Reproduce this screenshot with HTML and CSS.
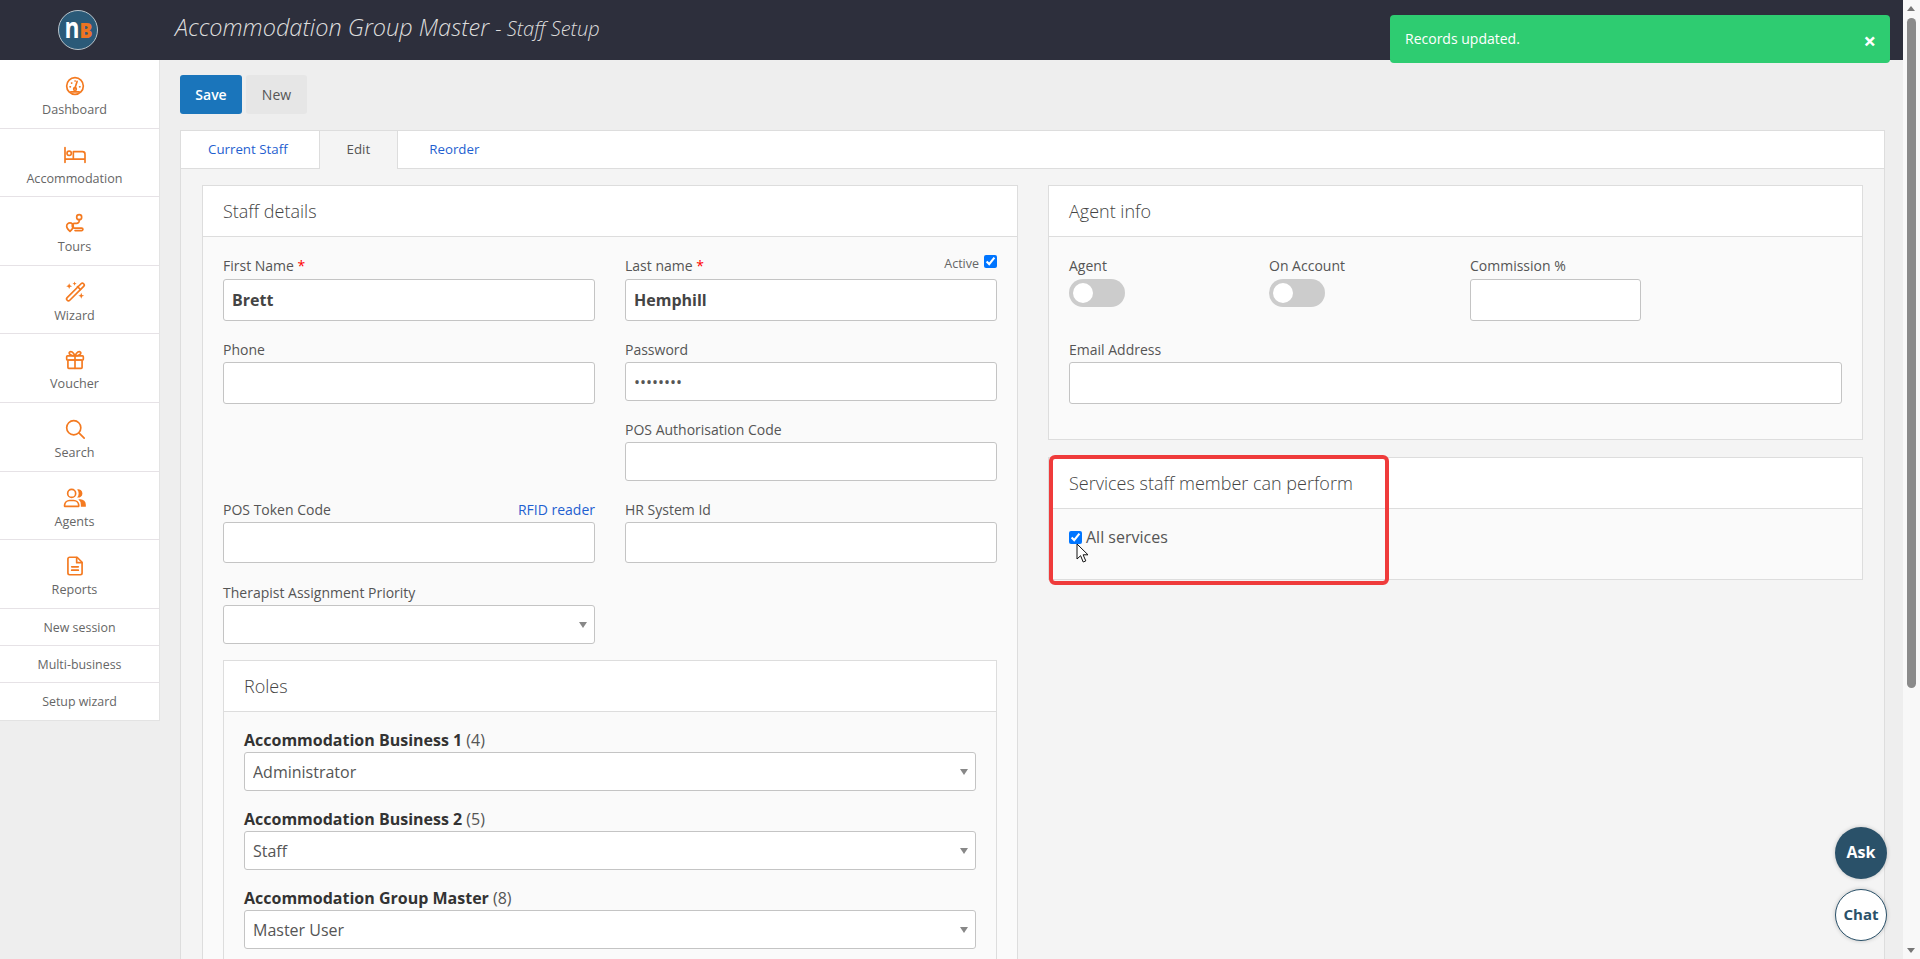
FILE: index.html
```html
<!DOCTYPE html>
<html>
    <head>
        <title>Staff Setup</title>
        <link rel="stylesheet" href="styles.css">
    </head>
    <body>
        <div class="shell">
            <div class="page">
                <div class="topbar">
                    <div class="logo_wrap">
                        <svg class="logo" width="42" height="42" viewBox="0 0 42 42">
                            <circle cx="21" cy="21" r="19.5" fill="#2b5a78" stroke="#b9c4cb" stroke-width="1"/>
                            <text x="7.5" y="29" class="logo_n" textLength="15" lengthAdjust="spacingAndGlyphs">n</text>
                            <text x="22.5" y="29" class="logo_b" textLength="13" lengthAdjust="spacingAndGlyphs">B</text>
                        </svg>
                    </div>
                    <h1 class="page_title">Accommodation Group Master <small>- Staff Setup</small></h1>
                </div>
                <div class="body_row">
                    <div class="sidebar">
                        <a class="nav_item">
                            <svg class="nav_icon" viewBox="0 0 24 24"><circle cx="12" cy="12" r="10"/><path d="M12 14.5l2.5-8"/><circle cx="12" cy="15.5" r="1.6"/><path d="M6 13h.5M7.8 8.5h.4M12 6h.3M17.5 13h.5M7 19h10"/></svg>
                            <span>Dashboard</span>
                        </a>
                        <a class="nav_item">
                            <svg class="nav_icon nav_icon_wide" viewBox="0 0 28 24"><path d="M2 3v18M2 17h24M26 21V11a3 3 0 0 0-3-3H12v9"/><circle cx="7" cy="10" r="2.6"/></svg>
                            <span>Accommodation</span>
                        </a>
                        <a class="nav_item">
                            <svg class="nav_icon" viewBox="0 0 24 24"><circle cx="17" cy="5" r="3"/><path d="M17 8v1.500a3 3 0 0 1-3 3h-2.500a2.800 2.800 0 0 0 0 5.600H20a1.500 1.500 0 0 1 0 3h-8"/><path d="M6 22s-4-3.500-4-6.200a4 4 0 0 1 8 0C10 18.500 6 22 6 22z"/></svg>
                            <span>Tours</span>
                        </a>
                        <a class="nav_item">
                            <svg class="nav_icon" viewBox="0 0 24 24"><rect x="-1.500" y="9.800" width="28" height="4.400" rx="2.200" transform="rotate(-45 12.500 12)"/><path d="M15 5.500l3.500 3.500"/><path class="icon_fill" d="M5 1.500l1 2.500 2.500 1-2.500 1-1 2.500-1-2.500-2.500-1 2.500-1zM11.500-.5l.7 1.800 1.800.7-1.800.7-.7 1.800-.7-1.800-1.800-.7 1.800-.7zM19.500 13l1 2.500 2.500 1-2.500 1-1 2.500-1-2.500-2.500-1 2.500-1z"/></svg>
                            <span>Wizard</span>
                        </a>
                        <a class="nav_item">
                            <svg class="nav_icon" viewBox="0 0 24 24"><rect x="2" y="7" width="20" height="5" rx="1"/><rect x="3.500" y="12" width="17" height="10" rx="1"/><path d="M12 7v15M12 7C10 2 7 1 5.500 2.500S6 7 12 7zM12 7c2-5 5-6 6.500-4.500S18 7 12 7z"/></svg>
                            <span>Voucher</span>
                        </a>
                        <a class="nav_item">
                            <svg class="nav_icon" viewBox="0 0 24 24"><circle cx="10.500" cy="10.500" r="8.500"/><path d="M16.700 16.700L23 23"/></svg>
                            <span>Search</span>
                        </a>
                        <a class="nav_item">
                            <svg class="nav_icon nav_icon_wide" viewBox="0 0 28 24"><circle cx="10" cy="6.500" r="4.800"/><path d="M1.500 22v-1.500a6 6 0 0 1 6-5.500h5a6 6 0 0 1 6 5.500V22z"/><path class="icon_fill" d="M16.500 1.700a5 5 0 1 1 0 9.600 7 7 0 0 0 0-9.600zM18 13.500h2.500a6.500 6.500 0 0 1 6.500 6.500v2.500h-6V20a8.500 8.500 0 0 0-3-6.500z"/></svg>
                            <span>Agents</span>
                        </a>
                        <a class="nav_item">
                            <svg class="nav_icon" viewBox="0 0 24 24"><path d="M5.500 1.500h9l6 6v13a2 2 0 0 1-2 2h-13a2 2 0 0 1-2-2v-17a2 2 0 0 1 2-2z"/><path d="M14 2v6h6M8 13h8M8 17h8"/></svg>
                            <span>Reports</span>
                        </a>
                        <a class="nav_link">New session</a>
                        <a class="nav_link">Multi-business</a>
                        <a class="nav_link">Setup wizard</a>
                    </div>
                    <div class="main">
                        <div class="actions">
                            <button class="btn btn_primary">Save</button>
                            <button class="btn">New</button>
                        </div>
                        <div class="tabs">
                            <div class="tab_bar">
                                <a class="tab">Current Staff</a>
                                <a class="tab tab_on">Edit</a>
                                <a class="tab">Reorder</a>
                            </div>
                            <div class="tab_content">
                                <div class="panel">
                                    <div class="panel_head">Staff details</div>
                                    <div class="panel_body">
                                        <div class="form_grid">
                                            <div class="field">
                                                <div class="field_label"><label>First Name <span class="req">*</span></label></div>
                                                <input class="text_input strong" type="text" value="Brett">
                                            </div>
                                            <div class="field">
                                                <div class="field_label"><label>Last name <span class="req">*</span></label>
                                                    <label class="active_check">Active <input type="checkbox" checked></label>
                                                </div>
                                                <input class="text_input strong" type="text" value="Hemphill">
                                            </div>
                                            <div class="field">
                                                <div class="field_label"><label>Phone</label></div>
                                                <input class="text_input" type="text">
                                            </div>
                                            <div class="field">
                                                <div class="field_label"><label>Password</label></div>
                                                <input class="text_input short" type="password" value="password">
                                            </div>
                                            <div class="field field_right">
                                                <div class="field_label"><label>POS Authorisation Code</label></div>
                                                <input class="text_input short" type="text">
                                            </div>
                                            <div class="field">
                                                <div class="field_label"><label>POS Token Code</label><a class="link">RFID reader</a></div>
                                                <input class="text_input short41" type="text">
                                            </div>
                                            <div class="field">
                                                <div class="field_label"><label>HR System Id</label></div>
                                                <input class="text_input short41" type="text">
                                            </div>
                                            <div class="field">
                                                <div class="field_label"><label>Therapist Assignment Priority</label></div>
                                                <div class="select_wrap"><select class="select_input"><option></option></select></div>
                                            </div>
                                        </div>
                                        <div class="panel panel_roles">
                                            <div class="panel_head">Roles</div>
                                            <div class="panel_body roles_body">
                                                <div class="role">
                                                    <div class="role_name"><b>Accommodation Business 1</b> (4)</div>
                                                    <div class="select_wrap"><select class="select_input"><option>Administrator</option></select></div>
                                                </div>
                                                <div class="role">
                                                    <div class="role_name"><b>Accommodation Business 2</b> (5)</div>
                                                    <div class="select_wrap"><select class="select_input"><option>Staff</option></select></div>
                                                </div>
                                                <div class="role">
                                                    <div class="role_name"><b>Accommodation Group Master</b> (8)</div>
                                                    <div class="select_wrap"><select class="select_input"><option>Master User</option></select></div>
                                                </div>
                                            </div>
                                        </div>
                                    </div>
                                </div>
                                <div class="side_col">
                                    <div class="panel">
                                        <div class="panel_head">Agent info</div>
                                        <div class="panel_body agent_body">
                                            <div class="agent_row">
                                                <div class="agent_cell">
                                                    <div class="field_label"><label>Agent</label></div>
                                                    <div class="toggle"></div>
                                                </div>
                                                <div class="agent_cell">
                                                    <div class="field_label"><label>On Account</label></div>
                                                    <div class="toggle"></div>
                                                </div>
                                                <div class="agent_cell agent_cell_input">
                                                    <div class="field_label"><label>Commission %</label></div>
                                                    <input class="text_input" type="text">
                                                </div>
                                            </div>
                                            <div class="field">
                                                <div class="field_label"><label>Email Address</label></div>
                                                <input class="text_input" type="text">
                                            </div>
                                        </div>
                                    </div>
                                    <div class="panel panel_services">
                                        <div class="panel_head">Services staff member can perform</div>
                                        <div class="panel_body services_body">
                                            <label class="all_services"><input type="checkbox" checked>All services</label>
                                        </div>
                                        <div class="highlight"></div>
                                        <svg class="cursor" width="14" height="21" viewBox="0 0 14 21"><path d="M1 1v15l3.600-3.300 2.600 6.300 2.600-1.100-2.700-6.100H12z" fill="#fff" stroke="#111" stroke-width="1"/></svg>
                                    </div>
                                </div>
                            </div>
                        </div>
                    </div>
                </div>
            </div>
            <div class="scrollbar">
                <div class="scroll_up"></div>
                <div class="scroll_thumb"></div>
                <div class="scroll_down"></div>
            </div>
        </div>
        <div class="toast">
            <span>Records updated.</span>
            <span class="toast_close">&times;</span>
        </div>
        <div class="help_btn help_ask">Ask</div>
        <div class="help_btn help_chat">Chat</div>
    </body>
</html>
```

FILE: styles.css
```css
* {
    box-sizing: border-box;
}
html, body {
    margin: 0;
    height: 100%;
    overflow: hidden;
}
body {
    font-family: "Open Sans", "Liberation Sans", sans-serif;
    font-size: 14px;
    color: #555;
    background: #eee;
}
.shell {
    display: flex;
    height: 959px;
}
.page {
    flex: 1;
    display: flex;
    flex-direction: column;
    min-width: 0;
}

/* top bar */
.topbar {
    height: 60px;
    flex: none;
    background: #2d2f3c;
    display: flex;
    align-items: center;
}
.logo_wrap {
    width: 175px;
    padding-left: 57px;
    display: flex;
}
.logo_n {
    font: 700 28px "Open Sans", sans-serif;
    fill: #fff;
}
.logo_b {
    font: 800 21px "Open Sans", sans-serif;
    fill: #ec7422;
}
.page_title {
    margin: 0 0 7px;
    font-size: 23.5px;
    font-weight: 300;
    font-style: italic;
    color: #ddd;
}
.page_title small {
    font-size: 20px;
    font-weight: 300;
}

/* sidebar */
.body_row {
    flex: 1;
    display: flex;
    min-height: 0;
}
.sidebar {
    width: 160px;
    flex: none;
    align-self: flex-start;
    background: #fff;
    border-right: 1px solid #e3e3e3;
    border-bottom: 1px solid #e3e3e3;
}
.nav_item {
    height: 68.6px;
    border-bottom: 1px solid #e6e2e6;
    display: flex;
    flex-direction: column;
    align-items: center;
    padding: 16px 10px 0 0;
    color: #666;
    font-size: 12.6px;
    line-height: 17px;
}
.nav_icon {
    width: 20px;
    height: 20px;
    margin-bottom: 5px;
    fill: none;
    stroke: #f47a20;
    stroke-width: 2;
    stroke-linecap: round;
    stroke-linejoin: round;
    overflow: visible;
}
.nav_icon_wide {
    width: 24px;
}
.nav_icon .icon_fill {
    fill: #f47a20;
    stroke: none;
}
.nav_link {
    display: block;
    height: 37.2px;
    line-height: 37px;
    text-align: center;
    font-size: 12.4px;
    color: #666;
    border-bottom: 1px solid #e6e2e6;
}
.nav_link:last-child {
    border-bottom: 0;
}

/* main */
.main {
    flex: 1;
    min-width: 0;
    padding: 15px 18px 0 20px;
    overflow: hidden;
}
.actions {
    display: flex;
    gap: 4px;
    margin-bottom: 16px;
}
.btn {
    width: 61px;
    height: 39px;
    border: 0;
    border-radius: 3px;
    background: #e6e6e6;
    color: #555;
    font: 14px "Open Sans", sans-serif;
}
.btn_primary {
    width: 62px;
    background: #1a75bb;
    color: #fff;
    font-weight: 600;
}
.tabs {
    border: 1px solid #ddd;
    border-bottom: 0;
    background: #f4f4f4;
}
.tab_bar {
    display: flex;
    height: 38px;
    background: #fff;
    border-bottom: 1px solid #ddd;
}
.tab {
    padding: 0 31px 0 27px;
    line-height: 37px;
    color: #1f5fd0;
    font-size: 13.3px;
}
.tab:last-child {
    padding-left: 31px;
}
.tab_on {
    height: 38px;
    padding: 0 27px;
    color: #555;
    background: #f4f4f4;
    border-left: 1px solid #ddd;
    border-right: 1px solid #ddd;
}
.tab_content {
    display: grid;
    grid-template-columns: 816px 815px;
    gap: 30px;
    padding: 16px 21px 0;
    align-items: start;
}

/* panels */
.panel {
    border: 1px solid #ddd;
    background: #fafafa;
}
.panel_head {
    height: 51px;
    padding: 0 20px;
    line-height: 50px;
    background: #fff;
    border-bottom: 1px solid #ddd;
    font-size: 18px;
    font-weight: 300;
    color: #444;
}
.panel_body {
    padding: 19px 20px 0;
}
.form_grid {
    display: grid;
    grid-template-columns: 372px 372px;
    grid-template-rows: 83px 80px 80px 83px 78px;
    column-gap: 30px;
}
.field_right {
    grid-column: 2;
}
.field_label {
    height: 23px;
    line-height: 20px;
    display: flex;
    justify-content: space-between;
    color: #555;
}
.form_grid .field:nth-child(n+3) .field_label, .agent_body > .field .field_label {
    padding-top: 1px;
}
.req {
    color: #f00;
}
.link {
    color: #1f5fd0;
}
.active_check {
    display: flex;
    align-items: flex-start;
    gap: 5px;
    margin-top: -1px;
    font-size: 12.5px;
    line-height: 17px;
    color: #666;
}
.active_check input {
    margin: 0;
}
.text_input, .select_input {
    display: block;
    width: 100%;
    height: 42px;
    padding: 0 8px;
    border: 1px solid #c4c4c4;
    border-radius: 3px;
    background: #fff;
    font: 16px "Open Sans", sans-serif;
    color: #555;
    outline: 0;
}
.text_input.short {
    height: 39px;
}
.text_input.short41 {
    height: 41px;
}
.strong {
    font-weight: 700;
    color: #444;
}
.select_wrap {
    position: relative;
}
.select_wrap::after {
    content: "";
    position: absolute;
    right: 8px;
    top: 17px;
    border-left: 4px solid transparent;
    border-right: 4px solid transparent;
    border-top: 6px solid #888;
}
.select_input {
    height: 39px;
    appearance: none;
}
.panel_roles {
    margin: 0 0 40px;
}
.roles_body {
    padding-top: 18px;
}
.role {
    height: 79px;
}
.role_name {
    height: 22px;
    line-height: 20px;
    font-size: 16px;
    color: #555;
}
.role_name b {
    color: #333;
}

/* right column */
.side_col {
    display: flex;
    flex-direction: column;
    gap: 17px;
}
.agent_body {
    height: 202px;
}
.agent_row {
    display: flex;
    height: 83px;
}
.agent_cell {
    width: 200px;
}
.agent_cell_input {
    width: 171px;
    margin-left: 1px;
}
.toggle {
    width: 56px;
    height: 28px;
    border-radius: 14px;
    background: #ccc;
    padding: 4px;
}
.toggle::before {
    content: "";
    display: block;
    width: 20px;
    height: 20px;
    border-radius: 50%;
    background: #fff;
}
.panel_services {
    position: relative;
    height: 123px;
}
.services_body {
    padding-top: 18px;
}
.all_services {
    display: flex;
    align-items: center;
    gap: 4px;
    font-size: 16px;
    line-height: 20px;
    color: #555;
}
.all_services input {
    margin: 0;
}
.highlight {
    position: absolute;
    left: 0;
    top: -3px;
    width: 340px;
    height: 130px;
    border: 4px solid #ef3b3b;
    border-radius: 6px;
}
.cursor {
    position: absolute;
    left: 27px;
    top: 85px;
}

/* scrollbar */
.scrollbar {
    width: 17px;
    flex: none;
    background: #f8f8f8;
    position: relative;
}
.scroll_up, .scroll_down {
    position: absolute;
    left: 4px;
    border-left: 4.500px solid transparent;
    border-right: 4.500px solid transparent;
}
.scroll_up {
    top: 6px;
    border-bottom: 5px solid #777;
}
.scroll_down {
    bottom: 6px;
    border-top: 5px solid #777;
}
.scroll_thumb {
    position: absolute;
    left: 4px;
    top: 18px;
    width: 9px;
    height: 670px;
    border-radius: 5px;
    background: #8a8a8a;
}

/* overlays */
.toast {
    position: absolute;
    left: 1390px;
    top: 15px;
    width: 500px;
    height: 48px;
    padding: 0 14px 2px 15px;
    border-radius: 4px;
    background: #2ecc71;
    color: #fff;
    font-size: 14px;
    display: flex;
    justify-content: space-between;
    align-items: center;
}
.toast_close {
    font-size: 22px;
    font-weight: 700;
    line-height: 20px;
    margin-top: 3px;
}
.help_btn {
    position: absolute;
    left: 1835px;
    width: 52px;
    height: 52px;
    padding-bottom: 2px;
    border-radius: 50%;
    font-size: 15px;
    font-weight: 700;
    display: flex;
    align-items: center;
    justify-content: center;
    box-shadow: 0 0 4px rgba(0, 0, 0, 0.2);
}
.help_ask {
    top: 827px;
    background: #2a5169;
    color: #fff;
    font-size: 16px;
}
.help_chat {
    top: 889px;
    background: #fff;
    border: 1px solid #2a5169;
    color: #2a5169;
}
```
